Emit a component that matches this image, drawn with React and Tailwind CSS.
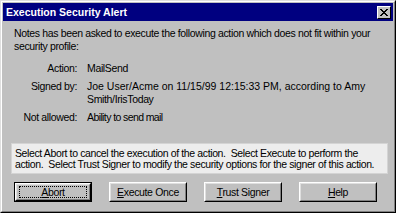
export default function App() {
  const font = { fontFamily: '"Liberation Sans", Arial, sans-serif' };
  const Btn = ({ children, def }) => (
    <div className={`w-[78px] h-[20px] ${def ? "border border-black" : ""}`}>
      <div className="w-full h-full border border-t-white border-l-white border-r-black border-b-black">
        <div className="w-full h-full border border-t-[#dfdfdf] border-l-[#dfdfdf] border-r-[#808080] border-b-[#808080] flex items-center justify-center">
          {def ? (
            <div className="w-[68px] h-[12px] border border-dotted border-black flex items-center justify-center text-[10.5px] tracking-[-0.35px] text-black leading-none">
              {children}
            </div>
          ) : (
            <span className="text-[10.5px] tracking-[-0.35px] text-black leading-none">{children}</span>
          )}
        </div>
      </div>
    </div>
  );
  return (
    <div style={font} className="w-[396px] h-[213px] bg-[#c0c0c0] border border-t-[#dfdfdf] border-l-[#dfdfdf] border-r-black border-b-black">
      <div className="w-full h-full border border-t-white border-l-white border-r-[#808080] border-b-[#808080] p-px flex flex-col">
        <div className="h-[18px] bg-[#000080] flex items-center justify-between pl-[3px] pr-[2px]">
          <span className="text-white font-bold text-[10.5px] leading-none">Execution Security Alert</span>
          <div className="w-[14px] h-[13px] bg-[#c0c0c0] border border-t-white border-l-white border-r-black border-b-black flex items-center justify-center">
            <svg width="8" height="7" viewBox="0 0 8 7">
              <path d="M0 0h2v1h-2zM6 0h2v1h-2zM1 1h2v1h-2zM5 1h2v1h-2zM2 2h4v1h-4zM3 3h2v1h-2zM2 4h4v1h-4zM1 5h2v1h-2zM5 5h2v1h-2zM0 6h2v1h-2zM6 6h2v1h-2z" fill="black" />
            </svg>
          </div>
        </div>
        <div className="pl-[11px] pt-[6px] text-[10.5px] tracking-[-0.35px] text-black leading-[13px] whitespace-nowrap">
          <p>Notes has been asked to execute the following action which does not fit within your<br />security profile:</p>
          <div className="mt-[9px] grid grid-cols-[63px_1fr] gap-x-[10px] gap-y-[5px]">
            <div className="text-right">Action:</div>
            <div>MailSend</div>
            <div className="text-right">Signed by:</div>
            <div><span className="tracking-normal">Joe User/Acme on 11/15/99 12:15:33 PM, according to Amy</span><br />Smith/IrisToday</div>
            <div className="text-right">Not allowed:</div>
            <div className="tracking-[-0.6px]">Ability to send mail</div>
          </div>
        </div>
        <div className="ml-[8px] mr-[5px] mt-[19px] bg-[#ededed] border border-[#d4d4d4] px-[3px] pt-[4px] pb-[3px] text-[10.5px] tracking-[-0.38px] leading-[11px] text-black whitespace-nowrap">
          Select Abort to cancel the execution of the action.&nbsp; Select Execute to perform the<br />
          action.&nbsp; Select Trust Signer to modify the security options for the signer of this action.
        </div>
        <div className="mt-[8px] pl-[11px] flex gap-[17px]">
          <Btn def><span><u>A</u>bort</span></Btn>
          <Btn><span><u>E</u>xecute Once</span></Btn>
          <Btn><span><u>T</u>rust Signer</span></Btn>
          <Btn><span><u>H</u>elp</span></Btn>
        </div>
      </div>
    </div>
  );
}
